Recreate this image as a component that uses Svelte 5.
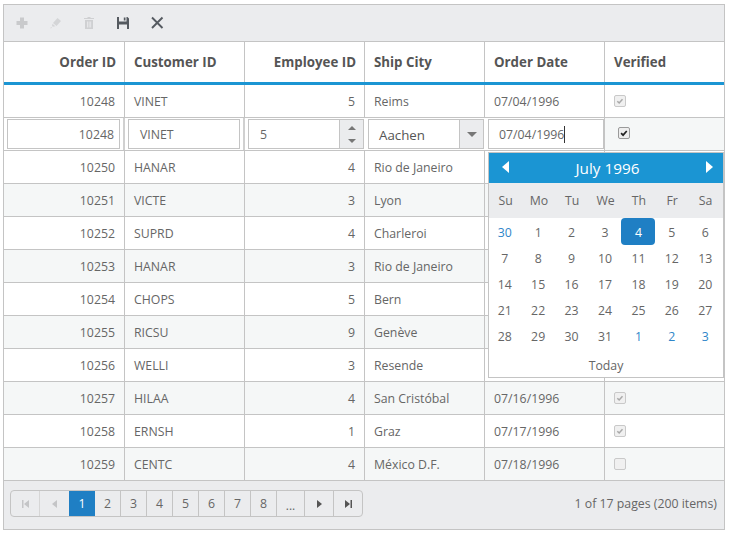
<script>
  const heads = [['Order ID', 'r'], ['Customer ID', ''], ['Employee ID', 'r'], ['Ship City', ''], ['Order Date', ''], ['Verified', '']];
  const rows = [
    ['10250', 'HANAR', 4, 'Rio de Janeiro', '', null],
    ['10251', 'VICTE', 3, 'Lyon', '', null],
    ['10252', 'SUPRD', 4, 'Charleroi', '', null],
    ['10253', 'HANAR', 3, 'Rio de Janeiro', '', null],
    ['10254', 'CHOPS', 5, 'Bern', '', null],
    ['10255', 'RICSU', 9, 'Genève', '', null],
    ['10256', 'WELLI', 3, 'Resende', '', null],
    ['10257', 'HILAA', 4, 'San Cristóbal', '07/16/1996', true],
    ['10258', 'ERNSH', 1, 'Graz', '07/17/1996', true],
    ['10259', 'CENTC', 4, 'México D.F.', '07/18/1996', false]
  ];
  const days = ['Su', 'Mo', 'Tu', 'We', 'Th', 'Fr', 'Sa'];
  const cal = [30, 1, 2, 3, 4, 5, 6, 7, 8, 9, 10, 11, 12, 13, 14, 15, 16, 17, 18, 19, 20, 21, 22, 23, 24, 25, 26, 27, 28, 29, 30, 31, 1, 2, 3];
  const pages = ['1', '2', '3', '4', '5', '6', '7', '8'];
</script>

<div class="grid">
  <div class="toolbar">
    <svg class="tool" viewBox="0 0 14 14"><path d="M5 1.500h4V5h3.500v4H9v3.500H5V9H1.500V5H5z" fill="#c9cacc"/></svg>
    <svg class="tool t2" viewBox="0 0 14 14"><path d="M8.500 2l3.500 3-4.500 5-3.500-3zM3.500 7.700l2.800 2.600-2.400.5-.9-.8zM1.300 12l1-1 .6.600-1 1z" fill="#d4d5d7"/></svg>
    <svg class="tool t3" viewBox="0 0 14 14"><path d="M5.500 1h3v1H12v1H2V2h3.500zM3 4h8v9H3zM5 5.500v6h.8v-6zm1.700 0v6h.8v-6zm1.600 0v6h.8v-6z" fill="#cfd0d2" fill-rule="evenodd"/></svg>
    <svg class="tool t4" viewBox="0 0 14 14"><path d="M1 1h2v4.500h7.500V1h1L13 2.500V13H1zM7.800 1.500h1.700v3H7.800zM3 8.500V13h8V8.500z" fill="#555a60" fill-rule="evenodd"/></svg>
    <svg class="tool t5" viewBox="0 0 14 14"><path d="M2 1.500l10.500 10.500M12.500 1.500L2 12" stroke="#555a60" stroke-width="1.900" fill="none"/></svg>
  </div>

  <div class="row head">
    {#each heads as h}
      <div class="cell" class:r={h[1] === 'r'}>{h[0]}</div>
    {/each}
  </div>

  <div class="row">
    <div class="cell r">10248</div>
    <div class="cell">VINET</div>
    <div class="cell r">5</div>
    <div class="cell">Reims</div>
    <div class="cell">07/04/1996</div>
    <div class="cell"><span class="check on"><svg viewBox="0 0 12 12"><path d="M2.800 6.200l2.200 2.200 4-4.600" stroke="#a9a9a9" stroke-width="1.800" fill="none"/></svg></span></div>
  </div>

  <div class="row edit">
    <div class="ecell first"><div class="input rt">10248</div></div>
    <div class="ecell"><div class="input c2">VINET</div></div>
    <div class="ecell e3">
      <div class="input spin">
        <span class="val">5</span>
        <span class="spinbtn">
          <svg viewBox="0 0 8 4"><path d="M0 4l4-4 4 4z" fill="#777"/></svg>
          <svg viewBox="0 0 8 4"><path d="M0 0l4 4 4-4z" fill="#777"/></svg>
        </span>
      </div>
    </div>
    <div class="ecell e4">
      <div class="input drop">
        <span class="val city">Aachen</span>
        <span class="dropbtn"><svg viewBox="0 0 10 5"><path d="M0 0l5 5 5-5z" fill="#777"/></svg></span>
      </div>
    </div>
    <div class="ecell e5"><div class="input date"><span>07/04/1996</span><i class="caret"></i></div></div>
    <div class="ecell e6"><span class="check dark"><svg viewBox="0 0 12 12"><path d="M2.500 6.200l2.400 2.400 4.400-5" stroke="#222" stroke-width="2" fill="none"/></svg></span></div>
  </div>

  {#each rows as row, i}
    <div class="row" class:alt={i % 2 === 1}>
      <div class="cell r">{row[0]}</div>
      <div class="cell">{row[1]}</div>
      <div class="cell r">{row[2]}</div>
      <div class="cell">{row[3]}</div>
      <div class="cell">{row[4]}</div>
      <div class="cell">
        {#if row[5] !== null}
          <span class="check" class:on={row[5]}>
            {#if row[5]}<svg viewBox="0 0 12 12"><path d="M2.800 6.200l2.200 2.200 4-4.600" stroke="#a9a9a9" stroke-width="1.800" fill="none"/></svg>{/if}
          </span>
        {/if}
      </div>
    </div>
  {/each}

  <div class="pager">
    <div class="pages">
      <span class="pg nav w1"><svg viewBox="0 0 7 8"><path d="M0 0h1.500v8H0zM7 0v8L2 4z" fill="#c4c5c7"/></svg></span>
      <span class="pg nav w2"><svg class="small" viewBox="0 0 5 8"><path d="M5 0v8L0 4z" fill="#c4c5c7"/></svg></span>
      {#each pages as p, i}
        <span class="pg num" class:active={i === 0}>{p}</span>
      {/each}
      <span class="pg dots">...</span>
      <span class="pg nav w3"><svg class="small" viewBox="0 0 5 8"><path d="M0 0v8l5-4z" fill="#555"/></svg></span>
      <span class="pg nav w4 last"><svg viewBox="0 0 7 8"><path d="M0 0v8l5-4zM5.500 0H7v8H5.500z" fill="#555"/></svg></span>
    </div>
    <div class="info">1 of 17 pages (200 items)</div>
  </div>

  <div class="calendar">
    <div class="calhead">
      <svg class="arrow" viewBox="0 0 7 12"><path d="M7 0v12L0 6z" fill="#fff"/></svg>
      <span>July 1996</span>
      <svg class="arrow" viewBox="0 0 7 12"><path d="M0 0v12l7-6z" fill="#fff"/></svg>
    </div>
    <div class="week">
      {#each days as d}<span>{d}</span>{/each}
    </div>
    <div class="dates">
      {#each cal as d, i}
        <span class:other={i === 0 || i > 31} class:today={i === 4}>{d}</span>
      {/each}
    </div>
    <div class="todaybtn">Today</div>
  </div>
</div>

<style>
  :global(body) {
    margin: 0;
    background: #fff;
    font-family: "Open Sans", "Noto Sans", sans-serif;
    font-size: 12.300px;
    color: #666;
  }
  .grid {
    position: relative;
    box-sizing: border-box;
    width: 722px;
    height: 526px;
    margin: 4px 0 0 3px;
    border: 1px solid #c4c4c4;
    display: flex;
    flex-direction: column;
  }
  .toolbar {
    height: 36px;
    flex: none;
    background: #ebecee;
    border-bottom: 1px solid #c4c4c4;
    display: flex;
    align-items: center;
    padding-left: 11px;
  }
  .tool { width: 14px; height: 14px; flex: none; }
  .t2 { margin-left: 20px; }
  .t3 { margin-left: 19px; }
  .t4, .t5 { margin-left: 20px; }
  .row {
    display: grid;
    grid-template-columns: repeat(6, 120px);
    height: 33px;
    flex: none;
    border-bottom: 1px solid #c4c4c4;
    box-sizing: border-box;
  }
  .row.alt { background: #f5f7f7; }
  .head {
    height: 43px;
    border-bottom: 3px solid #1b95d3;
    font-weight: 700;
    font-size: 13.300px;
    color: #555;
  }
  .cell {
    display: flex;
    align-items: center;
    padding: 0 9px 0 9px;
    border-left: 1px solid #c4c4c4;
    white-space: nowrap;
  }
  .row .cell:first-child { border-left: 0; }
  .cell.r { justify-content: flex-end; }
  .head .cell { padding: 0 8px 1px 9px; }
  .edit { display: grid; }
  .ecell {
    display: flex;
    align-items: center;
    border-left: 1px solid #d0d0d0;
    box-shadow: -1px 0 0 #d0d0d0;
    padding: 0 4px 0 3px;
  }
  .ecell.first { border-left: 0; box-shadow: none; padding-left: 3px; padding-right: 4px; }
  .input {
    box-sizing: border-box;
    width: 100%;
    height: 30px;
    border: 1px solid #c4c4c4;
    background: #fff;
    display: flex;
    align-items: center;
    padding: 1px 8px 0;
    font-size: 12.300px;
  }
  .rt { justify-content: flex-end; padding-right: 5px; }
  .c2 { padding-left: 11px; }
  .spin, .drop { padding: 0; overflow: hidden; }
  .val { flex: 1; padding: 1px 0 0 11px; }
  .city { padding-left: 10px; font-size: 13.300px; color: #555; }
  .spinbtn, .dropbtn {
    align-self: stretch;
    background: #ebecee;
    border-left: 1px solid #c4c4c4;
    display: flex;
    align-items: center;
    justify-content: center;
    flex: none;
  }
  .spinbtn { width: 23px; flex-direction: column; gap: 9px; }
  .spinbtn svg { width: 8px; height: 4px; }
  .dropbtn { width: 23px; }
  .dropbtn svg { width: 10px; height: 5px; }
  .e3 { padding-right: 0; }
  .e4 { border-left: 0; box-shadow: none; padding-left: 4px; padding-right: 0; }
  .e5 { border-left: 0; box-shadow: none; padding-left: 4px; padding-right: 0; }
  .date { padding-left: 10px; }
  .caret { width: 1px; height: 17px; background: #333; }
  .e6 { background: #f5f7f7; border-left: 1px solid #c4c4c4; box-shadow: none; padding: 9px 0 0 13px; align-items: flex-start; }
  .check {
    box-sizing: border-box;
    width: 12px;
    height: 12px;
    border: 1px solid #c9c9c9;
    border-radius: 2px;
    background: #f0f0f0;
    display: inline-block;
    flex: none;
  }
  .check svg { display: block; width: 10px; height: 10px; }
  .check.dark { border-color: #9a9a9a; background: #eee; }
  .pager {
    flex: 1;
    background: #ebecee;
    display: flex;
    justify-content: space-between;
    align-items: flex-start;
    padding: 9px 7px 0 6px;
  }
  .pages {
    display: flex;
    height: 27px;
    box-sizing: border-box;
    border: 1px solid #c4c4c4;
    border-radius: 4px;
    overflow: hidden;
  }
  .pg {
    display: flex;
    align-items: center;
    justify-content: center;
    width: 26px;
    box-sizing: border-box;
    border-right: 1px solid #c4c4c4;
  }
  .pg svg { width: 7px; height: 8px; }
  .pg svg.small { width: 5px; height: 8px; }
  .w1 { width: 29px; border-right-color: #d6d6d6; }
  .w2 { width: 29px; border-right: 0; }
  .active { background: #1f7fc4; color: #fff; border-right: 0; }
  .dots { width: 28px; font-size: 12px; padding-top: 3px; }
  .w3 { width: 29px; }
  .w4 { width: 28px; }
  .last { border-right: 0; }
  .info { line-height: 27px; color: #666; }
  .calendar {
    position: absolute;
    left: 484px;
    top: 147px;
    box-sizing: border-box;
    width: 236px;
    height: 226px;
    background: #fff;
    border: 1px solid #c4c4c4;
    display: flex;
    flex-direction: column;
  }
  .calhead {
    height: 30px;
    background: #1b95d3;
    color: #fff;
    font-size: 15.300px;
    display: flex;
    align-items: center;
    justify-content: space-between;
    padding: 0 10px 0 13px;
    flex: none;
  }
  .arrow { width: 7px; height: 12px; margin-top: -2px; }
  .week {
    height: 35px;
    background: #ebecee;
    display: grid;
    grid-template-columns: repeat(7, 33.300px);
    align-items: center;
    text-align: center;
    flex: none;
  }
  .dates {
    display: grid;
    grid-template-columns: repeat(7, 33.430px);
    grid-auto-rows: 26.200px;
    align-items: center;
    justify-items: center;
    margin-left: -1px;
  }
  .dates span {
    box-sizing: border-box;
    width: 34px;
    height: 27px;
    padding-top: 2px;
    display: flex;
    align-items: center;
    justify-content: center;
    border-radius: 4px;
  }
  .other { color: #2f86c9; }
  .today { background: #1f7fc4; color: #fff; font-weight: 400; }
  .dates .today { color: #fff; }
  .todaybtn { text-align: center; margin-top: 2px; line-height: 30px; }
</style>
